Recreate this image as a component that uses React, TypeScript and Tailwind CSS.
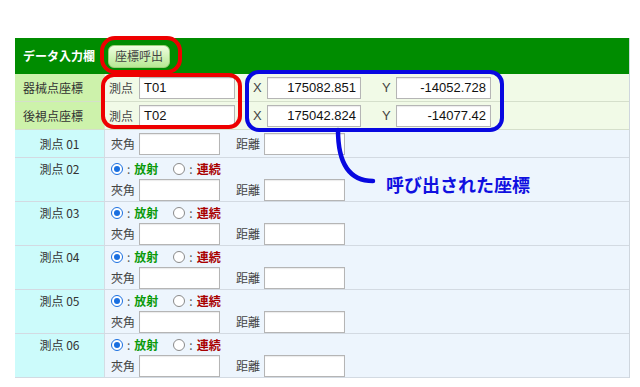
import React from "react";

const font = "font-['Noto_Sans_CJK_JP',sans-serif]";

const TextBox = ({ value = "", w, align = "left" }: { value?: string; w: string; align?: "left" | "right" }) => (
  <div
    className={`${w} h-[22px] bg-white border border-[#b5b5b5] shadow-[inset_0_1px_1px_rgba(0,0,0,0.08)] flex items-center px-[4px] text-[13px] text-[#111] font-['Liberation_Sans',sans-serif] ${
      align === "right" ? "justify-end" : "justify-start"
    }`}
  >
    {value}
  </div>
);

const Radio = ({ checked }: { checked: boolean }) => (
  <span
    className={`inline-flex items-center justify-center w-[12px] h-[12px] rounded-full border bg-white ${
      checked ? "border-[#1a6fe0] border-[1.5px]" : "border-[#8a8a8a]"
    }`}
  >
    {checked && <span className="w-[6px] h-[6px] rounded-full bg-[#1a6fe0]" />}
  </span>
);

const CoordRow = ({ no, x, y, title }: { no: string; x: string; y: string; title: string }) => (
  <div className="flex h-[28px] border-b border-[#d5dfcb]">
    <div className="w-[90px] bg-[#cdf2ab] border-r border-[#dbe6d0] flex items-center pl-[8px] text-[12px] text-[#333]">
      {title}
    </div>
    <div className="flex-1 bg-[#f1fae7] flex items-center pl-[4px] text-[12px] text-[#444]">
      <span className="w-[30px]">測点</span>
      <TextBox value={no} w="w-[96px]" />
      <span className="w-[18px]" />
      <span className="w-[14px] font-['Liberation_Sans',sans-serif] text-[13px]">X</span>
      <TextBox value={x} w="w-[94px]" align="right" />
      <span className="w-[21px]" />
      <span className="w-[14px] font-['Liberation_Sans',sans-serif] text-[13px]">Y</span>
      <TextBox value={y} w="w-[95px]" align="right" />
    </div>
  </div>
);

const InputLine = () => (
  <div className="flex items-center text-[12px] text-[#444]">
    <span className="w-[28px]">夾角</span>
    <TextBox w="w-[81px]" />
    <span className="w-[16px]" />
    <span className="w-[28px]">距離</span>
    <TextBox w="w-[81px]" />
  </div>
);

const MeasureRow = ({ n, radio }: { n: string; radio: boolean }) =>
  radio ? (
    <div className="flex h-[44px] border-b border-[#d3dae2]">
      <div className="w-[90px] bg-[#ccfbfb] border-r border-[#d3dde4] flex justify-center pt-[3px] text-[12px] text-[#333] leading-[16px]">
        測点 {n}
      </div>
      <div className="flex-1 bg-[#edf5fd] flex flex-col pl-[6px] pt-[3px]">
        <div className="flex items-center h-[16px] text-[12px] leading-[16px]">
          <Radio checked />
          <span className="text-[#555] mx-[4px]">:</span>
          <span className="text-[#0a9a0a] font-bold">放射</span>
          <span className="w-[15px]" />
          <Radio checked={false} />
          <span className="text-[#555] mx-[4px]">:</span>
          <span className="text-[#a80000] font-bold">連続</span>
        </div>
        <div className="mt-[2px]">
          <InputLine />
        </div>
      </div>
    </div>
  ) : (
    <div className="flex h-[28px] border-b border-[#d3dae2]">
      <div className="w-[90px] bg-[#ccfbfb] border-r border-[#d3dde4] flex justify-center items-center text-[12px] text-[#333]">
        測点 {n}
      </div>
      <div className="flex-1 bg-[#edf5fd] flex items-center pl-[6px]">
        <InputLine />
      </div>
    </div>
  );

export default function App() {
  return (
    <div className={`relative w-[640px] h-[387px] bg-white overflow-hidden ${font}`}>
      <div className="pt-[38px] pl-[15px]">
        <div className="w-[615px] border-r border-[#cfd6de]">
          <div className="h-[36px] bg-[#008c00] flex items-center pl-[8px]">
            <span className="text-white font-bold text-[12px] w-[85px]">データ入力欄</span>
            <button className="w-[62px] h-[23px] rounded-[6px] bg-gradient-to-b from-[#effde0] to-[#b7e994] border border-[#9bcf7a] text-[12px] text-[#444]">
              座標呼出
            </button>
          </div>
          <CoordRow title="器械点座標" no="T01" x="175082.851" y="-14052.728" />
          <CoordRow title="後視点座標" no="T02" x="175042.824" y="-14077.42" />
          <MeasureRow n="01" radio={false} />
          {["02", "03", "04", "05", "06"].map((n) => (
            <MeasureRow key={n} n={n} radio />
          ))}
        </div>
      </div>

      {/* annotations */}
      <div className="absolute left-[100px] top-[36px] w-[82px] h-[38px] rounded-[15px] border-[4px] border-[#ee0000]" />
      <div className="absolute left-[101px] top-[73px] w-[141px] h-[56px] rounded-[13px] border-[4px] border-[#ee0000]" />
      <div className="absolute left-[245px] top-[70px] w-[259px] h-[62px] rounded-[14px] border-[4px] border-[#0808e0]" />
      <svg className="absolute left-0 top-0" width="640" height="387">
        <path d="M338 130 Q338 181 373 181" fill="none" stroke="#0808e0" strokeWidth="4.5" strokeLinecap="round" />
      </svg>
      <div className="absolute left-[386px] top-[172px] text-[18px] font-bold text-[#1010e0] leading-[24px]">
        呼び出された座標
      </div>
    </div>
  );
}
